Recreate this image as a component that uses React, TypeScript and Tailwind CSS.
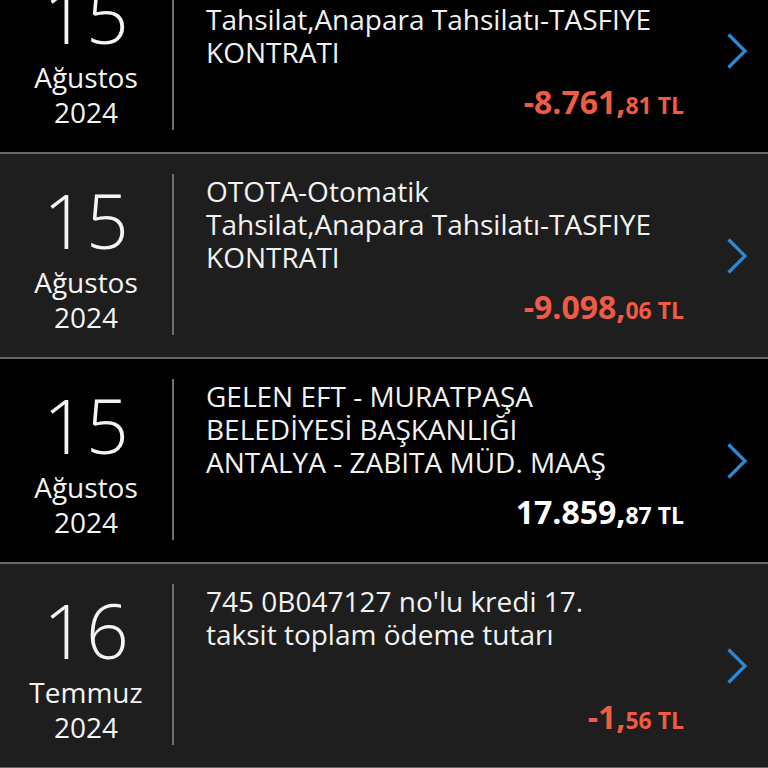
type Tx = {
  day: string
  month: string
  year: string
  lines: string[]
  whole: string
  cents: string
  negative: boolean
}

const items: Tx[] = [
  {
    day: '15',
    month: 'Ağustos',
    year: '2024',
    lines: ['OTOTA-Otomatik', 'Tahsilat,Anapara Tahsilatı-TASFIYE', 'KONTRATI'],
    whole: '-8.761,',
    cents: '81',
    negative: true,
  },
  {
    day: '15',
    month: 'Ağustos',
    year: '2024',
    lines: ['OTOTA-Otomatik', 'Tahsilat,Anapara Tahsilatı-TASFIYE', 'KONTRATI'],
    whole: '-9.098,',
    cents: '06',
    negative: true,
  },
  {
    day: '15',
    month: 'Ağustos',
    year: '2024',
    lines: ['GELEN EFT - MURATPAŞA', 'BELEDİYESİ BAŞKANLIĞI', 'ANTALYA - ZABITA MÜD. MAAŞ'],
    whole: '17.859,',
    cents: '87',
    negative: false,
  },
  {
    day: '16',
    month: 'Temmuz',
    year: '2024',
    lines: ["745 0B047127 no'lu kredi 17.", 'taksit toplam ödeme tutarı'],
    whole: '-1,',
    cents: '56',
    negative: true,
  },
]

function Chevron() {
  return (
    <svg width="22" height="38" viewBox="0 0 22 38" fill="none">
      <path d="M2.5 2.5 L19 19 L2.5 35.5" stroke="#2b8ad6" strokeWidth="3.2" />
    </svg>
  )
}

function Row({ tx, dark }: { tx: Tx; dark: boolean }) {
  return (
    <div
      className={`flex h-[205px] border-b-2 border-[#686868] ${dark ? 'bg-black' : 'bg-[#1e1e1e]'}`}
    >
      {/* Date */}
      <div className="flex w-[172px] shrink-0 flex-col items-center pt-[24px] text-[#f4f4f4]">
        <div className="text-[75px] font-light leading-[84px]">{tx.day}</div>
        <div className="mt-[2px] text-[28px] leading-[36px]">{tx.month}</div>
        <div className="-mt-px text-[28px] leading-[36px]">{tx.year}</div>
      </div>

      <div className="mt-[20px] mb-[22px] w-[2px] shrink-0 bg-[#6e6e6e]" />

      {/* Description + amount */}
      <div className="flex w-[510px] shrink-0 flex-col pt-[21px] pb-[25px] pl-[32px]">
        <div className="text-[28px] leading-[33px] text-[#f2f2f2]">
          {tx.lines.map((l, i) => (
            <div key={i} className="whitespace-nowrap">
              {l}
            </div>
          ))}
        </div>
        <div
          className={`mt-auto text-right font-bold leading-[38px] ${
            tx.negative ? 'text-[#f05b43]' : 'text-white'
          }`}
        >
          <span className="text-[32px]">{tx.whole}</span>
          <span className="text-[23px]">{tx.cents} TL</span>
        </div>
      </div>

      <div className="flex flex-1 items-center pl-[42px]">
        <Chevron />
      </div>
    </div>
  )
}

export default function App() {
  return (
    <div
      className="h-[768px] w-[768px] overflow-hidden bg-black"
      style={{ fontFamily: '"Open Sans", "Noto Sans", sans-serif' }}
    >
      <div className="-mt-[51px]">
        {items.map((tx, i) => (
          <Row key={i} tx={tx} dark={i % 2 === 0} />
        ))}
      </div>
    </div>
  )
}
